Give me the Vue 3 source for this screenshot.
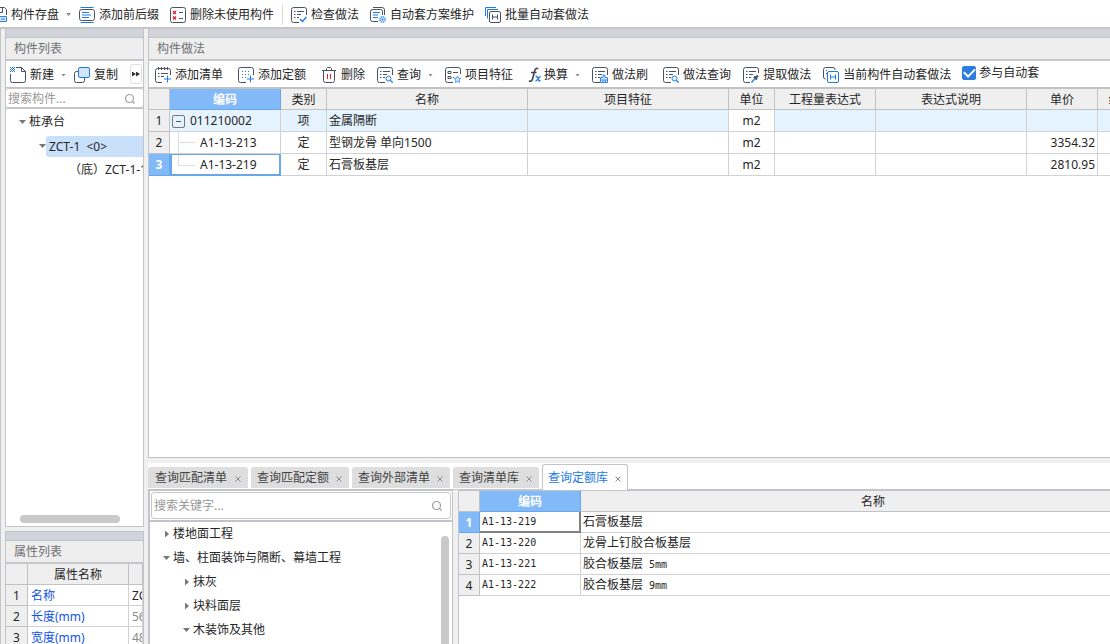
<script setup>
import { ref } from 'vue'

const topActions = [
  { icon: 'affix', label: '添加前后缀' },
  { icon: 'unused', label: '删除未使用构件', sep: true },
  { icon: 'check', label: '检查做法' },
  { icon: 'scheme', label: '自动套方案维护' },
  { icon: 'batch', label: '批量自动套做法' },
]

const methodActions = [
  { icon: 'list-add', label: '添加清单', roomy: true },
  { icon: 'quota-add', label: '添加定额', roomy: true },
  { icon: 'trash', label: '删除' },
  { icon: 'query', label: '查询', caret: true },
  { icon: 'feature', label: '项目特征', roomy: true },
  { icon: 'fx', label: '换算', caret: true, tight: true },
  { icon: 'brush', label: '做法刷', roomy: true },
  { icon: 'query', label: '做法查询' },
  { icon: 'extract', label: '提取做法' },
  { icon: 'current', label: '当前构件自动套做法' },
]

const methodHeads = ['类别', '名称', '项目特征', '单位', '工程量表达式', '表达式说明', '单价', '综合单价']
const methodRows = [
  { code: '011210002', kind: '项', name: '金属隔断', unit: 'm2', price: '' },
  { code: 'A1-13-213', kind: '定', name: '型钢龙骨 单向1500', unit: 'm2', price: '3354.32' },
  { code: 'A1-13-219', kind: '定', name: '石膏板基层', unit: 'm2', price: '2810.95' },
]

const properties = [
  { name: '名称', value: 'ZCT-1', own: true },
  { name: '长度(mm)', value: '5600' },
  { name: '宽度(mm)', value: '4800' },
]

const tabs = ['查询匹配清单', '查询匹配定额', '查询外部清单', '查询清单库', '查询定额库']
const activeTab = ref(4)

const chapters = [
  { label: '楼地面工程', level: 0, open: false },
  { label: '墙、柱面装饰与隔断、幕墙工程', level: 0, open: true },
  { label: '抹灰', level: 1, open: false },
  { label: '块料面层', level: 1, open: false },
  { label: '木装饰及其他', level: 1, open: true },
]

const quotas = [
  { code: 'A1-13-219', name: '石膏板基层', size: '' },
  { code: 'A1-13-220', name: '龙骨上钉胶合板基层', size: '' },
  { code: 'A1-13-221', name: '胶合板基层', size: '5mm' },
  { code: 'A1-13-222', name: '胶合板基层', size: '9mm' },
]

const autoApply = ref(true)
const componentFilter = ref('')
const keyword = ref('')
</script>

<template>
  <svg class="defs" aria-hidden="true">
    <defs>
      <g id="sheet" fill="none" stroke="#4a5262">
        <path d="M15.5 8V2.5a2 2 0 0 0-2-2h-11a2 2 0 0 0-2 2v11a2 2 0 0 0 2 2H8" />
        <path d="M3 4.5h1.5M6 4.5h7M3 7.5h1.5M6 7.5h4M3 10.5h1.5M6 10.5h2" />
      </g>
      <symbol id="save" viewBox="0 0 16 16">
        <g fill="none" stroke="#4a5262">
          <path d="M8 15.500H2.500a2 2 0 0 1-2-2v-11a2 2 0 0 1 2-2h11l2 2V8" />
          <path d="M4.500.5v5h7v-5" />
        </g>
        <path d="M8.500 9.500h7v5h-7zM10 12h4" fill="#d6e7fb" stroke="#2b82e8" />
      </symbol>
      <symbol id="affix" viewBox="0 0 16 16">
        <rect x="0.500" y="2.500" width="15" height="11" rx="2" fill="none" stroke="#4a5262" />
        <path d="M1.500.5h13M1.500 15.500h13M3 5.500h7M3 8h9M3 10.500h7" stroke="#1f7ae8" />
      </symbol>
      <symbol id="unused" viewBox="0 0 16 16">
        <rect x="0.500" y="0.500" width="15" height="15" rx="2" fill="none" stroke="#4a5262" />
        <path d="M9 5.500h4M9 11.500h4" stroke="#4a5262" />
        <path d="M3 4l3 3M6 4l-3 3M3 9.500l3 3M6 9.500l-3 3" stroke="#d9222a" stroke-width="1.300" />
      </symbol>
      <symbol id="check" viewBox="0 0 16 16">
        <use href="#sheet" />
        <path d="M9 12l2.500 2.500L15.500 10" fill="none" stroke="#1f7ae8" stroke-width="1.500" />
      </symbol>
      <symbol id="scheme" viewBox="0 0 16 16">
        <path d="M3 .5h9a2.500 2.500 0 0 1 2.500 2.500v5M8 14.500H2.500a2 2 0 0 1-2-2v-8a2 2 0 0 1 2-2h8a2 2 0 0 1 2 2V8" fill="none" stroke="#4a5262" />
        <path d="M3 5.500h7M3 8h5M3 10.500h5" stroke="#1f7ae8" />
        <circle cx="12.500" cy="12.500" r="2.700" fill="#d6e7fb" stroke="#5b9df0" stroke-width="1.500" stroke-dasharray="1.500 .6" />
        <circle cx="12.500" cy="12.500" r="1" fill="#2b82e8" />
      </symbol>
      <symbol id="batch" viewBox="0 0 16 16">
        <path d="M.5 9V.5H11M2.500 11.500v-9H13" fill="none" stroke="#1f7ae8" />
        <rect x="4.500" y="4.500" width="11" height="11" rx="1.500" fill="#fff" stroke="#4a5262" />
        <path d="M7.500 7.500v5M12.500 7.500v5M7.500 10h5" fill="none" stroke="#4a5262" />
      </symbol>
      <symbol id="new" viewBox="0 0 16 16">
        <path d="M6 .5h5.500l4 4v9a2 2 0 0 1-2 2h-11a2 2 0 0 1-2-2V7M11.500.5v4h4" fill="none" stroke="#4a5262" />
        <path d="M0 .5h5M0 2.500h5M0 4.500h5" stroke="#1f7ae8" stroke-dasharray="1 1" />
        <path d="M1 1.500h4M1 3.500h4" stroke="#1f7ae8" stroke-dasharray="1 1" />
      </symbol>
      <symbol id="copy" viewBox="0 0 16 16">
        <path d="M5 4.500H2.500a2 2 0 0 0-2 2v7a2 2 0 0 0 2 2h6a2 2 0 0 0 2-2V11" fill="none" stroke="#4a5262" />
        <rect x="4.500" y="0.500" width="11" height="10" rx="1.500" fill="#d3e5fc" stroke="#1f7ae8" />
      </symbol>
      <symbol id="list-add" viewBox="0 0 16 16">
        <path d="M15.500 8V3.500a2 2 0 0 0-2-2h-11a2 2 0 0 0-2 2v10a2 2 0 0 0 2 2H7M3.500 0v3M6.500 0v3M9.500 0v3M12.500 0v3M3 6.500h1.500M6 6.500h7M3 9.500h1.500M6 9.500h3" fill="none" stroke="#4a5262" />
        <path d="M12.500 8.500v7M9 12h7" stroke="#1f7ae8" />
      </symbol>
      <symbol id="quota-add" viewBox="0 0 16 16">
        <path d="M15.500 8V2.500a2 2 0 0 0-2-2h-11a2 2 0 0 0-2 2v11a2 2 0 0 0 2 2H8" fill="none" stroke="#4a5262" />
        <path d="M4 4.500h9M4 7.500h9M4 10.500h4" stroke="#1f7ae8" stroke-dasharray="1 2" />
        <path d="M12.500 8.500v7M9 12h7" stroke="#1f7ae8" />
      </symbol>
      <symbol id="trash" viewBox="0 0 16 16">
        <path d="M1 3.500h14M5.500 3.500v-2l1-1h3l1 1v2M2.500 3.500v10a2 2 0 0 0 2 2h7a2 2 0 0 0 2-2v-10" fill="none" stroke="#4a5262" />
        <path d="M6.500 7v5M9.500 7v5" stroke="#e0252d" />
      </symbol>
      <symbol id="query" viewBox="0 0 16 16">
        <use href="#sheet" />
        <circle cx="11.500" cy="11.500" r="2.500" fill="#e8f2fe" stroke="#2b82e8" />
        <path d="M13.300 13.300l2.400 2.400" stroke="#2b82e8" stroke-width="1.300" />
      </symbol>
      <symbol id="feature" viewBox="0 0 16 16">
        <path d="M15.500 7V2.500a2 2 0 0 0-2-2h-11a2 2 0 0 0-2 2v11a2 2 0 0 0 2 2H8M3 4.500h3v2H3zM8 5.500h5M3 9.500h3v2H3zM8 10.500h1" fill="none" stroke="#4a5262" />
        <path d="M12.500 9l1 2.200 2.300.3-1.700 1.600.4 2.300-2-1.100-2 1.100.4-2.300-1.700-1.600 2.300-.3z" fill="#e4f0fe" stroke="#4b94ee" />
      </symbol>
      <symbol id="fx" viewBox="2 0 16 16">
        <path d="M12 2C11 .8 9.300 1.500 8.800 3.500L6.500 12c-.5 2-2 2.700-3.500 1.800M5 5.500h5.500" fill="none" stroke="#3d4554" stroke-width="1.600" />
        <path d="M9.500 9.500c1.500-.5 2 .5 2.500 2.200s1.200 2.800 2.500 1.800M14.700 9.500c-1.500-.3-3 4.300-5.200 4.500" fill="none" stroke="#2b82e8" stroke-width="1.500" />
      </symbol>
      <symbol id="brush" viewBox="0 0 16 16">
        <use href="#sheet" />
        <path d="M11 8h2v2.500h2.500V13h-7v-2.500H11zM8.500 13v2.500h7V13M11 13.500v2M13.500 13.500v2" fill="#d6e7fb" stroke="#3686e6" />
      </symbol>
      <symbol id="extract" viewBox="0 0 16 16">
        <path d="M15.500 6V2.500a2 2 0 0 0-2-2h-11a2 2 0 0 0-2 2v11a2 2 0 0 0 2 2H7M3 4.500h1.500M6 4.500h7M3 7.500h1.500M6 7.500h4M3 10.500h1.500M6 10.500h2" fill="none" stroke="#4a5262" />
        <path d="M8.500 15.500l3.500-4" stroke="#2b82e8" stroke-width="1.500" />
        <path d="M11 9.500l3 3M12.500 11L15 8.500" stroke="#4a5262" stroke-width="2.200" />
      </symbol>
      <symbol id="current" viewBox="0 0 16 16">
        <path d="M12 3V2.500a2 2 0 0 0-2-2H2.500a2 2 0 0 0-2 2V10a2 2 0 0 0 2 2M3 3.500h1M3 6.500h1" fill="none" stroke="#4a5262" />
        <rect x="4.500" y="4.500" width="11" height="11" rx="1.500" fill="#fff" stroke="#1f7ae8" />
        <path d="M7.500 7.500v5M12.500 7.500v5M7.500 10h5" fill="none" stroke="#1f7ae8" />
      </symbol>
      <symbol id="lens" viewBox="0 0 12 12">
        <circle cx="5.500" cy="5.500" r="4" fill="none" stroke="#a0a0a0" stroke-width="1.200" />
        <path d="M8.500 8.500L10.500 10.500" stroke="#a0a0a0" stroke-width="1.300" />
      </symbol>
    </defs>
  </svg>

  <div class="app">
    <header class="topbar">
      <button type="button" class="act">
        <svg class="ico"><use href="#save" /></svg>构件存盘<i class="caret"></i>
      </button>
      <template v-for="a in topActions" :key="a.label">
        <button type="button" class="act">
          <svg class="ico"><use :href="'#' + a.icon" /></svg>{{ a.label }}
        </button>
        <span v-if="a.sep" class="sep"></span>
      </template>
    </header>

    <div class="body">
      <aside class="side">
        <section class="panel side-list">
          <h2 class="title">构件列表</h2>
          <div class="tools side-tools">
            <button type="button" class="act">
              <svg class="ico"><use href="#new" /></svg>新建<i class="caret"></i>
            </button>
            <button type="button" class="act">
              <svg class="ico"><use href="#copy" /></svg>复制
            </button>
            <button type="button" class="more" aria-label="更多">
              <i class="tri right"></i><i class="tri right"></i>
            </button>
          </div>
          <label class="search">
            <input v-model="componentFilter" type="text" placeholder="搜索构件..." />
            <svg class="lens"><use href="#lens" /></svg>
          </label>
          <ul class="tree side-tree">
            <li><i class="tri down"></i><span>桩承台</span></li>
            <li class="lv1"><i class="tri down"></i><span class="picked">ZCT-1&nbsp; &lt;0&gt;</span></li>
            <li class="lv2"><span>（底）ZCT-1-1</span></li>
          </ul>
          <div class="hscroll"><i></i></div>
        </section>

        <section class="panel side-props">
          <h2 class="title">属性列表</h2>
          <table class="grid props">
            <colgroup><col class="c-pnum" /><col class="c-pname" /><col /></colgroup>
            <thead>
              <tr><th></th><th>属性名称</th><th></th></tr>
            </thead>
            <tbody>
              <tr v-for="(p, i) in properties" :key="p.name">
                <th>{{ i + 1 }}</th>
                <td class="pname">{{ p.name }}</td>
                <td :class="{ dim: !p.own }">{{ p.value }}</td>
              </tr>
            </tbody>
          </table>
        </section>
      </aside>

      <main class="main">
        <section class="panel methods">
          <h2 class="title">构件做法</h2>
          <div class="tools method-tools">
            <button
              v-for="a in methodActions"
              :key="a.label"
              type="button"
              class="act"
              :class="{ roomy: a.roomy, tight: a.tight }"
            >
              <svg class="ico"><use :href="'#' + a.icon" /></svg>{{ a.label }}<i v-if="a.caret" class="caret"></i>
            </button>
            <label class="tick"><input v-model="autoApply" type="checkbox" />参与自动套</label>
          </div>
          <div class="clip">
            <table class="grid method-grid">
              <colgroup>
                <col class="c-num" /><col class="c-code" /><col class="c-short" /><col class="c-name" />
                <col class="c-name" /><col class="c-short" /><col class="c-expr" /><col class="c-note" />
                <col class="c-price" /><col class="c-total" />
              </colgroup>
              <thead>
                <tr>
                  <th></th>
                  <th class="on">编码</th>
                  <th v-for="h in methodHeads" :key="h">{{ h }}</th>
                </tr>
              </thead>
              <tbody>
                <tr v-for="(r, i) in methodRows" :key="r.code" :class="{ lead: i === 0 }">
                  <th :class="{ on: i === 2 }">{{ i + 1 }}</th>
                  <td class="code" :class="{ child: i > 0, last: i === 2 }">
                    <button v-if="i === 0" type="button" class="fold" aria-label="折叠"></button>{{ r.code }}
                  </td>
                  <td class="mid">{{ r.kind }}</td>
                  <td>{{ r.name }}</td>
                  <td></td>
                  <td class="mid unit">{{ r.unit }}</td>
                  <td></td>
                  <td></td>
                  <td class="num">{{ r.price }}</td>
                  <td></td>
                </tr>
              </tbody>
            </table>
          </div>
        </section>

        <section class="lookup">
          <nav class="tabs">
            <div v-for="(t, i) in tabs" :key="t" class="tab" :class="{ active: i === activeTab }">
              <button type="button" class="tab-name" @click="activeTab = i">{{ t }}</button>
              <button type="button" class="close" :aria-label="'关闭' + t">
                <svg viewBox="0 0 6 6"><path d="M.5.5l5 5M5.500.5l-5 5" stroke="#8c8c8c" /></svg>
              </button>
            </div>
          </nav>
          <div class="split">
            <div class="chapters">
              <label class="search wide">
                <input v-model="keyword" type="text" placeholder="搜索关键字..." />
                <svg class="lens"><use href="#lens" /></svg>
              </label>
              <div class="chapter-box">
                <ul class="tree chapter-tree">
                  <li v-for="c in chapters" :key="c.label" :class="{ lv1: c.level === 1 }">
                    <i class="tri" :class="c.open ? 'down' : 'right'"></i><span>{{ c.label }}</span>
                  </li>
                </ul>
                <i class="vthumb"></i>
              </div>
            </div>
            <div class="quota-box">
              <table class="grid quota-grid">
                <colgroup><col class="c-num" /><col class="c-qcode" /><col /></colgroup>
                <thead>
                  <tr><th></th><th class="on">编码</th><th>名称</th></tr>
                </thead>
                <tbody>
                  <tr v-for="(q, i) in quotas" :key="q.code">
                    <th :class="{ on: i === 0 }">{{ i + 1 }}</th>
                    <td class="mono" :class="{ focus: i === 0 }">{{ q.code }}</td>
                    <td>{{ q.name }}<span v-if="q.size" class="mono">&nbsp;{{ q.size }}</span></td>
                  </tr>
                </tbody>
              </table>
            </div>
          </div>
        </section>
      </main>
    </div>
  </div>
</template>

<style>
html,
body {
  margin: 0;
  overflow: hidden;
}
</style>

<style scoped>
* {
  box-sizing: border-box;
}
.defs {
  position: absolute;
  width: 0;
  height: 0;
}
.app {
  display: flex;
  flex-direction: column;
  height: 100vh;
  background: #f0f0f0;
  color: #262626;
  font: 12px/16px "Noto Sans", "Noto Sans CJK SC", sans-serif;
  overflow: hidden;
}
button {
  border: 0;
  padding: 0;
  background: none;
  color: inherit;
  font: inherit;
}
.topbar {
  display: flex;
  align-items: center;
  gap: 11px;
  height: 28px;
  margin-left: -9px;
  padding-top: 2px;
  background: #fff;
  border-bottom: 1px solid #c4c5c9;
  flex: none;
}
.act {
  display: flex;
  align-items: center;
  gap: 4px;
  white-space: nowrap;
  flex: none;
}
.ico {
  width: 16px;
  height: 16px;
  flex: none;
}
.topbar .act:first-child {
  margin-right: -3px;
}
.caret {
  width: 5px;
  height: 3px;
  margin-left: 3px;
  background: #8a8a8a;
  clip-path: polygon(0 0, 100% 0, 50% 100%);
}
.sep {
  width: 1px;
  height: 20px;
  margin: 0 -3px;
  background: #d8d8d8;
}
.body {
  flex: 1;
  min-height: 0;
  display: flex;
  gap: 4px;
  padding-left: 4px;
  border-top: 1px solid #c4c5c9;
  border-left: 1px solid #c4c5c9;
}
.side {
  width: 139px;
  flex: none;
  display: flex;
  flex-direction: column;
  gap: 4px;
}
.panel {
  display: flex;
  flex-direction: column;
  border: 1px solid #c3c4c9;
  border-top: 0;
  background: #fff;
  min-height: 0;
  overflow: hidden;
}
.title {
  margin: 0;
  height: 32px;
  padding: 2px 0 0 8px;
  border-top: 8px solid #d3d4da;
  border-bottom: 2px solid #c6c7cb;
  background: #eee;
  box-shadow: inset 0 1px #c3c4c9;
  color: #707070;
  font: inherit;
  line-height: 20px;
  flex: none;
}
.tools {
  display: flex;
  align-items: center;
  height: 28px;
  border-bottom: 2px solid #c2c2c2;
  padding-top: 2px;
  flex: none;
}
.side-list {
  flex: 1;
}
.side-tools {
  gap: 8px;
  height: 27px;
  padding-left: 4px;
  border-bottom-width: 1px;
}
.more {
  display: flex;
  align-items: center;
  justify-content: center;
  width: 12px;
  height: 20px;
  margin: 0 1px 2px auto;
  border: 1px solid #ddd;
  border-radius: 3px;
}
.more .tri {
  width: 4px;
  height: 5px;
  background: #333;
  flex: none;
}
.search {
  display: flex;
  align-items: center;
  height: 20px;
  border: 1px solid #c6c7cb;
  border-radius: 3px;
  padding: 0 7px 0 2px;
  background: #fff;
  flex: none;
}
.search input {
  flex: 1;
  min-width: 0;
  border: 0;
  padding: 0;
  outline: 0;
  background: none;
  font: inherit;
}
.search input::placeholder {
  color: #989898;
}
.lens {
  width: 12px;
  height: 12px;
  flex: none;
}
.side-list .search {
  margin: 0 -1px;
  padding-top: 1px;
}
.tree {
  margin: 0;
  padding: 0;
  list-style: none;
}
.tree li {
  display: flex;
  align-items: center;
  height: 24px;
  padding-left: 13px;
  white-space: nowrap;
}
.tree .lv1 {
  padding-left: 33px;
}
.tree .lv2 {
  padding-left: 60px;
}
.tri {
  width: 7px;
  height: 4px;
  background: #777;
  flex: none;
}
.tri.down {
  clip-path: polygon(0 0, 100% 0, 50% 100%);
}
.tri.right {
  clip-path: polygon(0 0, 100% 50%, 0 100%);
}
.tree span {
  padding-left: 3px;
}
.tree .picked {
  flex: 1;
  margin-left: 0;
  background: #c8e0fa;
  border-radius: 3px 0 0 3px;
  line-height: 21px;
}
.side-tree {
  flex: 1;
  padding-top: 1px;
  border-top: 1px solid #c3c4c9;
  overflow: hidden;
}
.hscroll {
  padding: 0 23px 3px 14px;
}
.hscroll i {
  display: block;
  height: 8px;
  border-radius: 4px;
  background: #c9c9c9;
}
.side-props {
  flex: none;
  height: 113px;
  border-top: 1px solid #c3c4c9;
  border-bottom: 0;
}
.grid {
  table-layout: fixed;
  width: 100%;
  border-collapse: separate;
  border-spacing: 0;
}
.grid th,
.grid td {
  height: 22px;
  padding: 0 2px;
  border-right: 1px solid #d2d2d2;
  border-bottom: 1px solid #d2d2d2;
  line-height: 16px;
  white-space: nowrap;
  overflow: hidden;
}
.grid td {
  text-align: left;
}
.grid th {
  padding: 1px 0 0;
  background: #efefef;
  border-color: #c2c2c2;
  font-weight: 400;
}
.grid thead th {
  height: 21px;
  padding-top: 2px;
}
.grid .on {
  background: #82baf9;
  border-color: #6aa7ea;
  color: #fff;
  font-weight: 700;
}
.c-num {
  width: 21px;
}
.c-pnum {
  width: 22px;
}
.c-pname {
  width: 101px;
}
.props th,
.props td {
  height: 21px;
}
.grid.props td {
  padding: 2px 0 0 3px;
}
.grid.props th {
  padding-top: 2px;
}
.props .pname {
  color: #1253e6;
}
.props .dim {
  color: #8a8a8a;
}
.main {
  flex: 1;
  min-width: 0;
  display: flex;
  flex-direction: column;
  gap: 5px;
}
.methods {
  flex: 1;
  border-right: 0;
}
.method-tools {
  gap: 12px;
  padding-left: 6px;
}
.roomy {
  margin-right: 3px;
}
.tight {
  gap: 0;
}
.tight .caret {
  margin-left: 7px;
}
.tick {
  display: flex;
  align-items: center;
  gap: 3px;
  margin: 0 0 4px -1px;
  white-space: nowrap;
}
.tick input {
  appearance: none;
  display: grid;
  place-items: center;
  width: 14px;
  height: 14px;
  margin: 0;
  border: 1px solid #2b7de0;
  border-radius: 2px;
}
.tick input:checked {
  background: #2b7de0;
}
.tick input:checked::after {
  content: "";
  width: 9px;
  height: 5px;
  margin-bottom: 3px;
  border: solid #fff;
  border-width: 0 0 2px 2px;
  transform: rotate(-45deg);
}
.clip {
  overflow: hidden;
}
.method-grid {
  width: 1019px;
}
.c-code {
  width: 111px;
}
.c-short {
  width: 46px;
}
.c-name {
  width: 201px;
}
.c-expr {
  width: 101px;
}
.c-note {
  width: 151px;
}
.c-price {
  width: 71px;
}
.lead td {
  background: #e5f3ff;
}
.lead .unit {
  background: #fff;
}
.grid .mid {
  text-align: center;
}
.grid .num {
  text-align: right;
}
.code .fold {
  width: 13px;
  height: 13px;
  margin-right: 5px;
  border: 1px solid #777;
  border-radius: 2px;
  background: linear-gradient(#555, #555) center / 5px 1px no-repeat;
  vertical-align: -2px;
}
.grid .child {
  padding-left: 30px;
  background:
    linear-gradient(#dedede, #dedede) 8px 0 / 1px 100% no-repeat,
    linear-gradient(#dedede, #dedede) 8px 10px / 17px 1px no-repeat;
}
.grid .last {
  padding-left: 28px;
  border: 2px solid #6aa7ea;
  border-width: 1px 2px 2px;
  background:
    linear-gradient(#dedede, #dedede) 6px 0 / 1px 10px no-repeat,
    linear-gradient(#dedede, #dedede) 6px 10px / 17px 1px no-repeat;
}
.lookup {
  flex: none;
  height: 181px;
  display: flex;
  flex-direction: column;
  background: #fff;
}
.tabs {
  display: flex;
  align-items: flex-end;
  gap: 3px;
  height: 27px;
  border-bottom: 1px solid #c3c4c9;
  flex: none;
}
.tab {
  display: flex;
  align-items: center;
  gap: 7px;
  height: 21px;
  margin-bottom: 1px;
  padding: 0 7px 0 6px;
  border-radius: 3px 3px 0 0;
  background: #dedede;
  color: #444;
}
.tab:first-child {
  gap: 8px;
  padding-left: 7px;
}
.tab.active {
  height: 26px;
  margin-bottom: -1px;
  padding: 0 6px 0 5px;
  border: 1px solid #c3c4c9;
  border-bottom: 0;
  background: #fff;
  color: #1b79e6;
}
.close {
  display: flex;
  margin-top: 2px;
}
.close svg {
  width: 6px;
  height: 6px;
}
.split {
  flex: 1;
  min-height: 0;
  display: flex;
  gap: 5px;
  background: #f0f0f0;
}
.chapters {
  width: 305px;
  flex: none;
  display: flex;
  flex-direction: column;
  border: 1px solid #c3c4c9;
  border-width: 1px 1px 0 2px;
  background: #fff;
}
.search.wide {
  height: 27px;
  margin: 1px;
}
.chapter-box {
  flex: 1;
  min-height: 0;
  display: flex;
  border-top: 2px solid #c3c4c9;
  overflow: hidden;
}
.chapter-tree {
  flex: 1;
}
.chapter-tree .tri.right {
  width: 4px;
  height: 7px;
  margin: 0 1px 0 2px;
}
.vthumb {
  width: 8px;
  margin: 14px 3px 0 0;
  border-radius: 4px 4px 0 0;
  background: #c9c9c9;
}
.quota-box {
  flex: 1;
  min-width: 0;
  border: 1px solid #c3c4c9;
  border-width: 1px 0 0 1px;
  background: #fff;
  overflow: hidden;
}
.c-qcode {
  width: 101px;
}
.quota-grid {
  width: calc(100% + 56px);
}
.quota-grid th,
.quota-grid td {
  height: 21px;
}
.quota-grid tbody th {
  padding-top: 2px;
}
.mono {
  font-family: "DejaVu Sans Mono", "Noto Sans CJK SC", monospace;
  font-size: 10px;
}
.grid .focus {
  border-right: 2px solid #808080;
  border-bottom: 2px solid #808080;
}
</style>
